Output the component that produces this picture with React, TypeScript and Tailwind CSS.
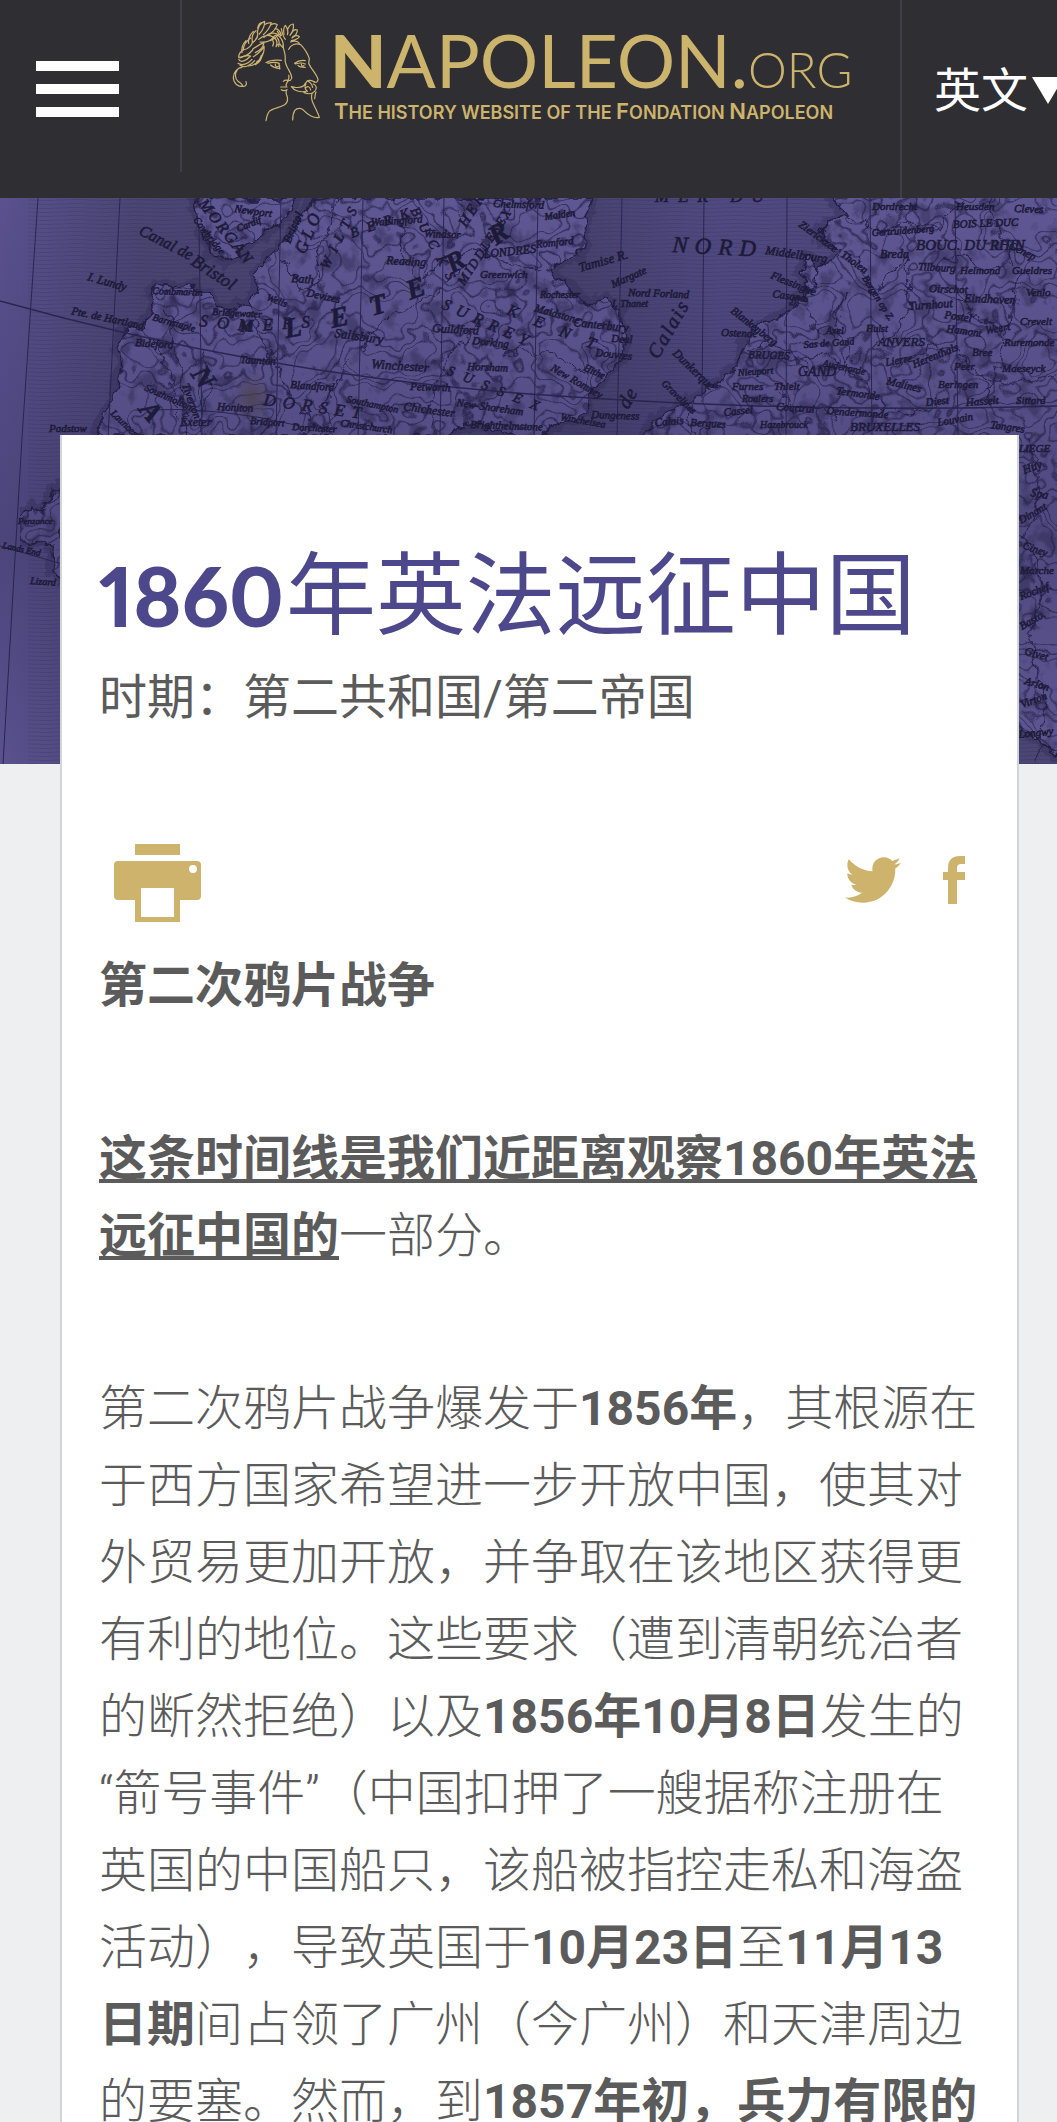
import { FaTwitter } from "react-icons/fa";

type Label = { text: string; x: number; y: number; r?: number; s?: number; gap?: number; bold?: boolean };

const labels: Label[] = [
  { text: "Canal de", x: 138, y: 36, r: 27, s: 16 },
  { text: "Bristol", x: 190, y: 66, r: 33, s: 18 },
  { text: "I. Lundy", x: 87, y: 82, r: 16, s: 12 },
  { text: "Pte. de Hartland", x: 71, y: 116, r: 12, s: 11 },
  { text: "Combmartin", x: 152, y: 96, r: 2, s: 10 },
  { text: "Barnstaple", x: 152, y: 122, r: 16, s: 10 },
  { text: "Bideford", x: 135, y: 148, r: 4, s: 11 },
  { text: "Bridgewater", x: 212, y: 117, r: 3, s: 10 },
  { text: "Bath", x: 291, y: 84, r: 4, s: 12 },
  { text: "Wells", x: 266, y: 102, r: 20, s: 10 },
  { text: "Devizes", x: 306, y: 98, r: 12, s: 11 },
  { text: "MORGAN", x: 198, y: 6, r: 52, s: 16, gap: 2 },
  { text: "Cowbridge", x: 193, y: 22, r: 52, s: 10 },
  { text: "Newport", x: 234, y: 14, r: 8, s: 11 },
  { text: "Cardif", x: 238, y: 34, r: -22, s: 10 },
  { text: "GLO", x: 305, y: 57, r: -68, s: 17, gap: 4 },
  { text: "Bristol", x: 290, y: 46, r: -66, s: 12 },
  { text: "SOM", x: 199, y: 128, r: 6, s: 17, gap: 9 },
  { text: "MERS", x: 240, y: 134, r: -4, s: 17, gap: 9 },
  { text: "N", x: 190, y: 176, r: 55, s: 28, bold: true },
  { text: "A", x: 138, y: 212, r: 50, s: 28, bold: true },
  { text: "L", x: 286, y: 140, r: -10, s: 28, bold: true },
  { text: "E", x: 332, y: 130, r: -12, s: 28, bold: true },
  { text: "T", x: 372, y: 118, r: -16, s: 28, bold: true },
  { text: "E", x: 410, y: 102, r: -20, s: 28, bold: true },
  { text: "R", x: 452, y: 76, r: -30, s: 28, bold: true },
  { text: "R", x: 496, y: 48, r: -34, s: 28, bold: true },
  { text: "WILTS", x: 328, y: 72, r: -64, s: 14, gap: 7 },
  { text: "BERK", x: 352, y: 40, r: -20, s: 14, gap: 9 },
  { text: "BUCKS", x: 410, y: 12, r: 62, s: 14, gap: 9 },
  { text: "HERTS", x: 466, y: 30, r: -58, s: 15, gap: 3 },
  { text: "MIDDLESEX", x: 464, y: 88, r: -57, s: 13, gap: 2 },
  { text: "Wallingford", x: 371, y: 28, r: -4, s: 11 },
  { text: "Reading", x: 386, y: 66, r: 3, s: 12 },
  { text: "Windsor", x: 424, y: 39, r: 2, s: 11 },
  { text: "LONDRES", x: 484, y: 60, r: -6, s: 12 },
  { text: "Greenwich", x: 480, y: 80, r: 0, s: 11 },
  { text: "SURREY", x: 441, y: 110, r: 24, s: 16, gap: 7 },
  { text: "Guildford", x: 432, y: 134, r: 3, s: 12 },
  { text: "Dorking", x: 472, y: 146, r: 6, s: 11 },
  { text: "Salisbury", x: 334, y: 139, r: 8, s: 13 },
  { text: "Winchester", x: 371, y: 170, r: 4, s: 13 },
  { text: "Tiverton", x: 182, y: 187, r: 70, s: 11 },
  { text: "Southmolton", x: 144, y: 192, r: 24, s: 10 },
  { text: "Launceston", x: 110, y: 216, r: 44, s: 10 },
  { text: "Exeter", x: 180, y: 228, r: 0, s: 12 },
  { text: "Taunton", x: 240, y: 165, r: 3, s: 11 },
  { text: "Honiton", x: 217, y: 212, r: 3, s: 11 },
  { text: "DORSET", x: 263, y: 207, r: 8, s: 17, gap: 7 },
  { text: "Blandford", x: 290, y: 190, r: 4, s: 11 },
  { text: "Bridport", x: 250, y: 226, r: 4, s: 10 },
  { text: "Dorchester", x: 292, y: 232, r: 3, s: 10 },
  { text: "Southampton", x: 346, y: 204, r: 12, s: 10 },
  { text: "Christchurch", x: 340, y: 228, r: 8, s: 10 },
  { text: "Chichester", x: 403, y: 212, r: 8, s: 12 },
  { text: "Petworth", x: 410, y: 192, r: 2, s: 11 },
  { text: "New-Shoreham", x: 456, y: 208, r: 8, s: 11 },
  { text: "Brighthelmstone", x: 470, y: 230, r: 2, s: 11 },
  { text: "Horsham", x: 467, y: 172, r: 2, s: 11 },
  { text: "SUSSEX", x: 446, y: 176, r: 22, s: 14, gap: 10 },
  { text: "KENT", x: 506, y: 116, r: 22, s: 16, gap: 18 },
  { text: "Chelmsford", x: 493, y: 9, r: 2, s: 11 },
  { text: "Malden", x: 545, y: 22, r: -8, s: 10 },
  { text: "Romford", x: 536, y: 50, r: -6, s: 11 },
  { text: "Tamise R.", x: 580, y: 74, r: -16, s: 13 },
  { text: "Margate", x: 613, y: 90, r: -24, s: 11 },
  { text: "Nord Forland", x: 628, y: 98, r: 2, s: 11 },
  { text: "I. Thanet", x: 612, y: 109, r: 0, s: 10 },
  { text: "Rochester", x: 540, y: 100, r: 0, s: 10 },
  { text: "Maidstone", x: 534, y: 113, r: 16, s: 11 },
  { text: "Canterbury", x: 573, y: 128, r: 6, s: 12 },
  { text: "Deal", x: 611, y: 144, r: 3, s: 11 },
  { text: "Douvres", x: 595, y: 158, r: 6, s: 11 },
  { text: "New Romney", x: 550, y: 172, r: 30, s: 11 },
  { text: "Hithe", x: 583, y: 172, r: 24, s: 10 },
  { text: "Dungeness", x: 591, y: 220, r: 2, s: 11 },
  { text: "Winchelsea", x: 560, y: 222, r: 10, s: 10 },
  { text: "MER  DU", x: 655, y: 4, r: 0, s: 17, gap: 9 },
  { text: "NORD", x: 672, y: 54, r: 3, s: 23, gap: 7 },
  { text: "Calais", x: 658, y: 162, r: -60, s: 20, gap: 2 },
  { text: "de", x: 628, y: 212, r: -60, s: 20, gap: 1 },
  { text: "Dunkerque", x: 672, y: 156, r: 44, s: 12 },
  { text: "Gravelines", x: 661, y: 186, r: 44, s: 10 },
  { text: "Blankenberg", x: 730, y: 114, r: 38, s: 11 },
  { text: "Ostende", x: 721, y: 138, r: 2, s: 11 },
  { text: "BRUGES", x: 748, y: 160, r: 2, s: 11 },
  { text: "Middelbourg", x: 765, y: 56, r: 8, s: 12 },
  { text: "Flessingue", x: 770, y: 80, r: 22, s: 11 },
  { text: "Casand", x: 772, y: 99, r: 8, s: 11 },
  { text: "Zierickzee", x: 798, y: 28, r: 36, s: 11 },
  { text: "Tholen", x: 840, y: 58, r: 36, s: 11 },
  { text: "Axel", x: 826, y: 136, r: 0, s: 10 },
  { text: "Hulst", x: 866, y: 134, r: 0, s: 10 },
  { text: "Sas de Gand", x: 804, y: 150, r: -4, s: 10 },
  { text: "Bergen op Z.", x: 862, y: 80, r: 58, s: 10 },
  { text: "Dordrecht", x: 872, y: 12, r: 0, s: 11 },
  { text: "Heusden", x: 956, y: 12, r: 0, s: 11 },
  { text: "Gertruidenberg", x: 872, y: 38, r: -4, s: 10 },
  { text: "Breda", x: 880, y: 60, r: 0, s: 12 },
  { text: "BOIS LE DUC", x: 953, y: 30, r: -2, s: 11 },
  { text: "BOUC. DU RHIN", x: 916, y: 52, r: 0, s: 15 },
  { text: "Tilbourg", x: 918, y: 72, r: 3, s: 11 },
  { text: "Helmond", x: 960, y: 76, r: 0, s: 11 },
  { text: "Oirschot", x: 929, y: 94, r: 2, s: 11 },
  { text: "Eindhoven", x: 964, y: 104, r: 2, s: 12 },
  { text: "Turnhout", x: 909, y: 112, r: -4, s: 12 },
  { text: "Postel", x: 944, y: 120, r: 8, s: 11 },
  { text: "Hamont", x: 946, y: 134, r: 8, s: 11 },
  { text: "Weert", x: 986, y: 136, r: -10, s: 11 },
  { text: "Venlo", x: 1026, y: 98, r: 0, s: 11 },
  { text: "ANVERS", x: 878, y: 148, r: 0, s: 13 },
  { text: "Herenthals", x: 914, y: 170, r: -22, s: 11 },
  { text: "Ruremonde", x: 1004, y: 148, r: 0, s: 11 },
  { text: "Lierre", x: 886, y: 168, r: -10, s: 11 },
  { text: "GAND", x: 798, y: 178, r: 0, s: 14 },
  { text: "Furnes", x: 732, y: 192, r: 0, s: 11 },
  { text: "Nieuport", x: 738, y: 178, r: -4, s: 10 },
  { text: "Thielt", x: 774, y: 192, r: 0, s: 11 },
  { text: "Roulers", x: 742, y: 204, r: 0, s: 10 },
  { text: "Cassel", x: 724, y: 218, r: -6, s: 11 },
  { text: "Calais", x: 655, y: 228, r: -4, s: 11 },
  { text: "Bergues", x: 690, y: 228, r: 3, s: 11 },
  { text: "Hazebrouck", x: 760, y: 230, r: 0, s: 10 },
  { text: "Audenarde", x: 822, y: 168, r: 12, s: 10 },
  { text: "Termonde", x: 836, y: 196, r: 8, s: 11 },
  { text: "Malines", x: 886, y: 186, r: 14, s: 11 },
  { text: "Courtrai", x: 776, y: 212, r: 4, s: 11 },
  { text: "Dendermonde", x: 826, y: 216, r: 4, s: 11 },
  { text: "BRUXELLES", x: 850, y: 233, r: 0, s: 13 },
  { text: "Diest", x: 926, y: 208, r: -6, s: 11 },
  { text: "Beringen", x: 938, y: 190, r: 0, s: 11 },
  { text: "Peer", x: 954, y: 172, r: 0, s: 11 },
  { text: "Bree", x: 972, y: 158, r: 0, s: 11 },
  { text: "Louvain", x: 938, y: 228, r: -10, s: 11 },
  { text: "Tongres", x: 990, y: 230, r: 8, s: 11 },
  { text: "Gueldres", x: 1012, y: 76, r: 0, s: 11 },
  { text: "Crevelt", x: 1020, y: 127, r: 0, s: 11 },
  { text: "Cleves", x: 1014, y: 14, r: 2, s: 11 },
  { text: "Genep", x: 1008, y: 50, r: 26, s: 11 },
  { text: "Hasselt", x: 966, y: 208, r: -4, s: 11 },
  { text: "Sittard", x: 1016, y: 206, r: 0, s: 11 },
  { text: "Maeseyck", x: 1002, y: 174, r: 0, s: 11 },
  { text: "LIEGE", x: 1019, y: 254, r: 0, s: 11 },
  { text: "Huy", x: 1024, y: 276, r: -20, s: 12 },
  { text: "Spa", x: 1030, y: 298, r: 10, s: 12 },
  { text: "Dinant", x: 1021, y: 326, r: -30, s: 11 },
  { text: "Ciney", x: 1022, y: 350, r: 20, s: 11 },
  { text: "Marche", x: 1020, y: 376, r: 0, s: 11 },
  { text: "Rochef.", x: 1021, y: 402, r: -20, s: 11 },
  { text: "Basto.", x: 1022, y: 432, r: -30, s: 11 },
  { text: "Givet", x: 1024, y: 456, r: 16, s: 11 },
  { text: "Arlon", x: 1024, y: 486, r: 16, s: 11 },
  { text: "Virton", x: 1022, y: 510, r: -20, s: 11 },
  { text: "Longwy", x: 1019, y: 540, r: -6, s: 11 },
  { text: "Padstow", x: 49, y: 234, r: 0, s: 11 },
  { text: "Penzance", x: 18, y: 326, r: 0, s: 9 },
  { text: "Lands End", x: 2, y: 350, r: 12, s: 9 },
  { text: "Lizard", x: 30, y: 386, r: 4, s: 10 },
];

const land = [
  "M193 0 L197 24 L203 40 L212 58 L224 64 L238 60 L246 46 L262 40 L272 30 L286 18 L296 0 Z",
  "M312 0 L288 42 L276 50 L258 72 L255 92 L250 108 L236 108 L225 113 L212 98 L190 87 L172 90 L155 86 L149 98 L150 116 L142 132 L125 130 L119 150 L121 170 L114 194 L108 208 L97 232 L92 240 L440 240 L462 228 L482 226 L520 240 L536 240 L560 224 L588 216 L591 196 L604 180 L620 164 L626 138 L620 112 L606 102 L588 106 L570 92 L566 84 L548 74 L562 64 L578 60 L586 44 L588 16 L592 0 Z",
  "M830 0 L850 18 L836 22 L818 32 L820 42 L842 50 L836 60 L822 68 L812 86 L800 100 L782 118 L756 128 L744 146 L734 170 L712 188 L690 202 L664 216 L648 230 L640 244 L700 300 L1070 566 L1070 -10 L830 -10 Z",
  "M806 56 L800 76 L812 92 L818 78 L812 60 Z",
  "M20 322 L30 310 L42 314 L50 300 L64 286 L64 382 L54 374 L48 342 L30 348 L20 338 Z",
];

const rivers = [
  "M336 0 L330 30 L318 56 L322 84 L300 92 L282 60",
  "M250 108 L262 140 L276 164 L290 200 L322 237",
  "M400 20 L402 52 L420 86 L444 60 L470 52 L500 62 L540 72",
  "M360 152 L378 128 L410 108 L440 92 L462 70",
  "M350 160 L340 184 L322 206 L336 230",
  "M166 108 L176 148 L182 188 L188 240",
  "M206 150 L210 184 L200 240 M152 140 L170 176 L178 220",
  "M480 126 L450 156 L436 190 L430 237",
  "M502 160 L526 152 L560 158 L588 176",
  "M846 18 L880 34 L912 22 L942 30 L960 0",
  "M748 150 L776 144 L800 162 L828 156 L860 178 L884 210 L910 216 L940 206",
  "M990 0 L1002 40 L1018 76 L1012 120 L1002 158 L986 204",
  "M860 60 L870 96 L906 58 L912 110 L896 136 L870 152",
  "M846 96 L832 130 L850 150 L846 176 M806 104 L816 134 L838 142",
  "M690 202 L688 220 L694 240 M780 190 L796 214 L820 208 L842 226",
  "M900 166 L930 148 L960 156 L984 180 L1010 186 L1057 176",
  "M942 60 L966 56 L984 72 L1012 66 M950 100 L984 124 L1004 140",
  "M1030 240 L1040 290 L1026 340 L1044 390 L1030 440 L1046 500 L1036 566",
];

function MapBackdrop() {
  return (
    <svg
      aria-hidden="true"
      viewBox="0 0 1057 566"
      preserveAspectRatio="xMidYMin slice"
      className="h-full w-full"
    >
      <defs>
        <linearGradient id="sea" x1="0" x2="1" y1="0" y2="0">
          <stop offset="0" stopColor="#5a518e" />
          <stop offset="0.13" stopColor="#4b4573" />
          <stop offset="0.55" stopColor="#48426f" />
          <stop offset="0.68" stopColor="#514a82" />
          <stop offset="1" stopColor="#4b4573" />
        </linearGradient>
        <linearGradient id="shade" x1="0" x2="0" y1="0" y2="1">
          <stop offset="0" stopColor="#231f45" stopOpacity="0" />
          <stop offset="0.6" stopColor="#231f45" stopOpacity="0.25" />
          <stop offset="1" stopColor="#231f45" stopOpacity="0" />
        </linearGradient>
        <pattern id="waves" width="60" height="4" patternUnits="userSpaceOnUse">
          <path d="M0 2 Q15 1 30 2 T60 2" stroke="#2c284f" strokeOpacity="0.25" fill="none" />
        </pattern>
        <filter id="rough" x="0" y="0" width="100%" height="100%" colorInterpolationFilters="sRGB">
          <feTurbulence type="fractalNoise" baseFrequency="0.07" numOctaves="3" seed="4" />
          <feDisplacementMap in="SourceGraphic" scale="16" xChannelSelector="R" yChannelSelector="G" />
        </filter>
        <filter id="contours" x="0" y="0" width="100%" height="100%" colorInterpolationFilters="sRGB">
          <feTurbulence type="fractalNoise" baseFrequency="0.022" numOctaves="3" seed="11" />
          <feColorMatrix values="0 0 0 0 0.13  0 0 0 0 0.11  0 0 0 0 0.25  1 0 0 0 0" />
          <feComponentTransfer>
            <feFuncA
              type="table"
              tableValues="0 0 0 0 0 0 0 0 0 0 0 0 0 0 0 0 0 0.6 0 0 0 0 0.7 0 0 0 0 0.6 0 0 0 0 0 0 0 0 0 0 0 0 0 0 0 0"
            />
          </feComponentTransfer>
          <feComposite in2="SourceGraphic" operator="in" />
        </filter>
        <filter id="relief" x="0" y="0" width="100%" height="100%" colorInterpolationFilters="sRGB">
          <feTurbulence type="fractalNoise" baseFrequency="0.05 0.04" numOctaves="5" seed="23" />
          <feColorMatrix values="0 0 0 0 0.12  0 0 0 0 0.1  0 0 0 0 0.22  0 5 0 0 -2.7" />
          <feComposite in2="SourceGraphic" operator="in" />
        </filter>
        <radialGradient id="stain">
          <stop offset="0" stopColor="#4f4640" stopOpacity="0.7" />
          <stop offset="1" stopColor="#4f4640" stopOpacity="0" />
        </radialGradient>
      </defs>

      <rect width="1057" height="566" fill="url(#sea)" />
      <rect x="28" width="1029" height="566" fill="url(#waves)" />
      <g filter="url(#rough)">
        {land.map((d) => (
          <path key={d} d={d} fill="none" stroke="#332e58" strokeOpacity="0.4" strokeWidth="12" />
        ))}
        {land.map((d) => (
          <path key={d} d={d} fill="#5f5793" stroke="#231f42" strokeWidth="1.6" />
        ))}
        {rivers.map((d) => (
          <path key={d} d={d} fill="none" stroke="#2a2650" strokeWidth="1.2" />
        ))}
      </g>
      <g filter="url(#contours)">
        {land.map((d) => (
          <path key={d} d={d} />
        ))}
      </g>
      <g filter="url(#relief)" opacity="0.35">
        {land.map((d) => (
          <path key={d} d={d} />
        ))}
      </g>
      <ellipse cx="252" cy="200" rx="20" ry="26" fill="url(#stain)" />

      <g fill="none" stroke="#2a2650" strokeWidth="1">
        <path d="M38 0 L22 240 L3 566 M120 0 L108 240 M199 30 L202 240 M281 0 L276 240 M363 0 L358 240" />
        <path d="M444 0 L440 240 M538 0 L534 240 M622 0 L617 240 M704 0 L702 200 M787 0 L786 240 M870 0 L872 240 M955 0 L958 240" />
        <path d="M0 103 Q260 176 530 196 T1057 208" strokeWidth="1.5" />
        <path d="M0 348 L62 366 M140 212 Q220 208 300 228" />
      </g>

      <g fill="#1d1a38" fontFamily="'Liberation Serif', serif" fontStyle="italic">
        {labels.map((l) => (
          <text
            key={`${l.text}-${l.x}`}
            x={l.x}
            y={l.y}
            fontSize={l.s}
            letterSpacing={l.gap}
            fontWeight={l.bold ? 700 : 400}
            stroke="#1d1a38"
            strokeWidth="0.6"
            transform={`rotate(${l.r ?? 0} ${l.x} ${l.y})`}
          >
            {l.text}
          </text>
        ))}
      </g>
      <rect width="1057" height="566" fill="url(#shade)" />
    </svg>
  );
}

function Profiles() {
  return (
    <svg
      aria-hidden="true"
      viewBox="30 30 276 312"
      className="h-[104px] w-[92px] shrink-0"
      fill="none"
      stroke="#cdb473"
      strokeWidth="3.6"
      strokeLinecap="round"
      strokeLinejoin="round"
    >
      {/* front profile */}
      <path d="M189 106 C190 120 197 130 196 146 C193 156 198 164 203 174 C209 185 216 196 215 205 C213 211 208 212 206 212" />
      <path d="M206 212 C200 209 194 210 190 214 M206 196 C209 202 206 208 202 216 C200 220 196 224 199 229" />
      <path d="M182 231 H201 M184 239 C190 243 196 242 201 239 M201 239 C195 246 199 253 202 261 C204 271 201 279 194 284 C178 294 158 294 148 304 C141 312 140 322 138 332" />
      <path d="M138 158 C150 150 165 149 184 151 M144 160 C156 156 168 156 178 160 M152 165 C160 173 170 175 180 176 M176 160 C180 166 180 172 178 177 M166 162 C165 169 170 172 176 169" />
      <path d="M66 172 C54 172 40 186 40 202 C40 220 54 230 66 229 C76 231 82 224 78 215 M52 180 C44 190 44 205 54 214 C60 219 66 220 68 228" />
      {/* laurel wreath */}
      <path d="M112 68 C114 50 122 38 134 34 C134 48 128 62 118 72 M128 38 C119 36 114 46 113 56" />
      <path d="M134 44 C142 36 150 40 154 38 C150 52 142 64 130 74 M154 44 C162 38 168 42 172 44 C168 56 160 66 146 74" />
      <path d="M108 62 C98 70 94 84 98 98 C108 90 116 78 112 66 M100 64 C88 76 84 88 86 100" />
      <path d="M92 84 C78 94 70 108 70 120 C84 118 96 106 98 94 M78 92 C66 104 64 116 66 128" />
      <path d="M72 118 C62 124 56 134 56 142 C72 142 88 132 98 120 M98 118 C108 110 120 102 132 98 C130 110 120 122 106 128" />
      <path d="M56 148 C62 160 78 152 92 138 C84 136 74 136 60 144 M54 160 C66 168 84 162 96 148 M60 166 C72 174 92 168 104 152" />
      <path d="M100 140 C112 132 126 124 132 108 C134 126 126 144 110 156 M86 168 C104 166 118 154 124 136 M106 164 C118 158 126 146 128 130" />
      <path d="M116 88 C130 76 148 72 160 82 C152 92 136 98 120 96 M132 82 C146 70 162 66 176 74 C166 84 158 90 150 92" />
      <path d="M158 86 C162 76 168 74 174 76 C184 84 190 94 190 108 M164 84 C172 92 172 102 168 110 M172 84 C180 92 178 102 176 110 M158 92 C164 98 160 104 158 108 M168 110 C174 102 180 98 182 106 L188 112" />
      <path d="M172 64 L182 78 M166 56 C174 56 182 66 184 76" />
      {/* rear profile */}
      <path d="M192 74 C190 60 192 50 196 46 C202 54 206 64 202 74 M202 60 C206 50 214 42 220 42 C222 54 218 66 210 76 M214 70 C220 60 228 58 232 60 C232 70 226 78 216 84" />
      <path d="M184 56 C186 66 188 78 196 88 M218 80 C226 76 234 76 238 80 C234 88 224 90 214 92 M212 96 C220 92 232 92 238 100" />
      <path d="M206 118 C212 104 228 98 242 104 C252 114 262 128 268 146 L266 160 C272 176 290 192 294 208 C294 216 288 218 282 216" />
      <path d="M224 160 C234 152 246 150 256 152 M226 162 C238 158 248 158 256 162 M234 166 C238 172 248 172 256 172 M244 162 C244 168 248 170 252 166" />
      <path d="M284 216 C272 208 262 210 256 220 C252 230 242 234 226 232 L214 230 C222 242 240 248 258 244 M258 222 C252 230 256 240 262 244 M262 212 C270 216 276 222 278 232 M256 234 C262 228 270 228 272 240 M280 222 C290 226 292 236 284 244 C276 252 262 252 252 248" />
      <path d="M276 250 C272 262 276 274 282 286 C288 298 294 310 298 322 C284 326 264 316 252 302 C246 294 232 292 224 302 C218 312 218 322 218 330 M288 246 C284 254 286 260 284 266" />
    </svg>
  );
}

function SiteHeader() {
  return (
    <header className="flex h-[198px] overflow-hidden bg-[#2f2e33]">
      <div className="h-[172px] w-[182px] shrink-0 border-r-2 border-[#3f3e44]">
        <button type="button" aria-label="Menu" className="ml-9 mt-[61px] flex w-[83px] flex-col gap-[13px]">
          <span className="h-[10px] w-full bg-white" />
          <span className="h-[10px] w-full bg-white" />
          <span className="h-[10px] w-full bg-white" />
        </button>
      </div>
      <a href="#" className="flex min-w-0 flex-1 items-start pl-12 pt-5 text-[#cdb46c]">
        <Profiles />
        <span className="ml-2 flex flex-col whitespace-nowrap font-['Lato',sans-serif]">
          <span className="text-[73px] leading-[80px]">
            <b className="font-black">N</b>APOLEON.<span className="text-[49px] leading-none font-light">ORG</span>
          </span>
          <span className="ml-1 font-['Inter',sans-serif] text-[18px] leading-6 font-semibold uppercase">
            <span className="text-[22px] leading-none">T</span>he history website of the{" "}
            <span className="text-[22px] leading-none">F</span>ondation{" "}
            <span className="text-[22px] leading-none">N</span>apoleon
          </span>
        </span>
      </a>
      <div className="w-[157px] shrink-0 border-l-2 border-[#3f3e44]">
        <button
          type="button"
          className="ml-8 mt-[52px] flex items-center gap-1 whitespace-nowrap text-[47px] leading-[77px] text-white"
        >
          英文
          <svg aria-hidden="true" viewBox="0 0 32 27" className="h-[27px] w-8 shrink-0" fill="currentColor">
            <path d="M0 0 H32 L16 27 Z" />
          </svg>
        </button>
      </div>
    </header>
  );
}

function ShareBar() {
  return (
    <div className="flex items-start justify-between pl-[15px] pr-5 text-[#cdb36b]">
      <button type="button" aria-label="打印">
        <svg viewBox="0 0 87 78" className="h-[78px] w-[87px]" fill="currentColor">
          <path d="M21 0 H66 V11 H21 Z" />
          <path
            fillRule="evenodd"
            d="M4 17 H83 Q87 17 87 21 V52 Q87 56 83 56 H66 V78 H21 V56 H4 Q0 56 0 52 V21 Q0 17 4 17 Z M27 44 V73 H60 V44 Z M79 21 A4 4 0 1 0 79 29 A4 4 0 1 0 79 21 Z"
          />
        </svg>
      </button>
      <div className="flex items-center gap-[42px] pt-2">
        <a href="#" aria-label="Twitter">
          <FaTwitter className="size-[56px]" />
        </a>
        <a href="#" aria-label="Facebook">
          <svg viewBox="0 0 22 48" className="h-12 w-[22px]" fill="currentColor">
            <path d="M5 48 V24 H0 V16 H5 V12 Q5 0 17 0 H22 V8 H18 Q14 8 14 12 V16 H22 V24 H14 V48 Z" />
          </svg>
        </a>
      </div>
    </div>
  );
}

export default function App() {
  return (
    <div
      lang="zh-CN"
      className="min-h-screen bg-[#edeff1] font-['Roboto','Noto_Sans_CJK_SC',sans-serif] text-[#5b5b5b] [text-spacing-trim:space-all]"
    >
      <SiteHeader />
      <div className="h-[566px] overflow-hidden bg-[#4b4573]">
        <MapBackdrop />
      </div>
      <main className="relative -mt-[329px] mr-[38px] ml-[60px] border-x-2 border-[#d3d4d6] bg-white pt-[106px] pr-8 pl-[37px]">
        <h1 className="text-[90px] leading-[108px] text-[#4d488c]">
          <span className="mr-[2px] font-['Lato',sans-serif] text-[82px] font-black proportional-nums">1860</span>
          年英法远征中国
        </h1>
        <p className="mt-2 text-5xl leading-[77px]">时期：第二共和国/第二帝国</p>
        <div className="mt-[108px]">
          <ShareBar />
        </div>
        <article className="mt-[25px] flex flex-col gap-24 text-5xl leading-[77px] font-light">
          <h2 className="font-bold">第二次鸦片战争</h2>
          <p>
            <a href="#" className="font-bold underline decoration-4 underline-offset-4 [text-decoration-skip-ink:none]">
              这条时间线是我们近距离观察1860年英法远征中国的
            </a>
            一部分。
          </p>
          <p>
            第二次鸦片战争爆发于<strong className="font-bold">1856年</strong>
            ，其根源在于西方国家希望进一步开放中国，使其对外贸易更加开放，并争取在该地区获得更有利的地位。这些要求（遭到清朝统治者的断然拒绝）以及
            <strong className="font-bold">1856年10月8日</strong>
            发生的“箭号事件”（中国扣押了一艘据称注册在英国的中国船只，该船被指控走私和海盗活动），导致英国于
            <strong className="font-bold">10月23日</strong>至<strong className="font-bold">11月13日期</strong>
            间占领了广州（今广州）和天津周边的要塞。然而，到
            <strong className="font-bold">1857年初，兵力有限的</strong>
          </p>
        </article>
      </main>
    </div>
  );
}
